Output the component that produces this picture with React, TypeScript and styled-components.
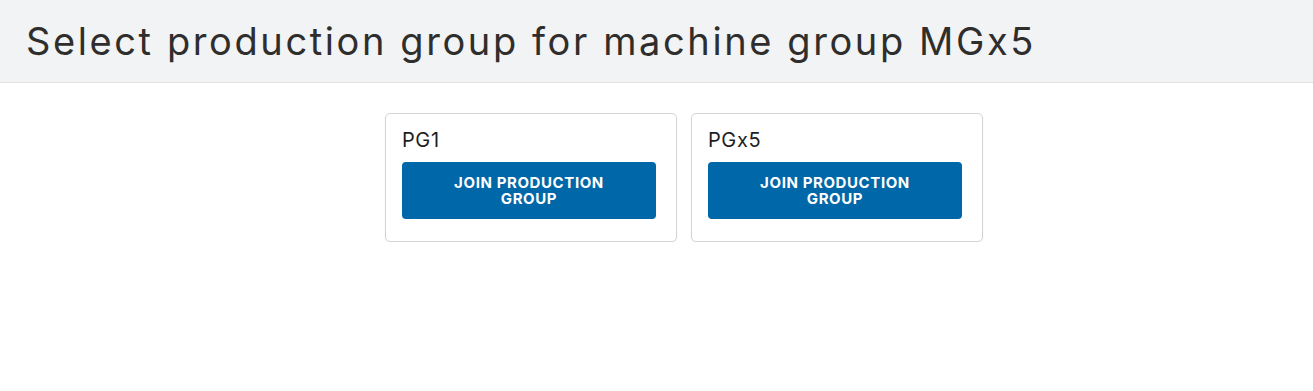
import React from "react";
import styled, { createGlobalStyle } from "styled-components";

const GlobalStyle = createGlobalStyle`
  html, body { margin: 0; padding: 0; background: #ffffff; }
  body { font-family: "Inter", "Liberation Sans", sans-serif; }
  * { box-sizing: border-box; }
`;

const Page = styled.div`
  display: flex;
  flex-direction: column;
  width: 100%;
`;

const Header = styled.header`
  height: 83px;
  background: #f2f3f5;
  border-bottom: 1px solid #e2e3e5;
  display: flex;
  align-items: center;
  padding: 0 26px;
`;

const Title = styled.h1`
  margin: 0;
  font-family: "Inter", "Liberation Sans", sans-serif;
  font-weight: 400;
  font-size: 38px;
  color: #2f2e2c;
  letter-spacing: 2.6px;
`;

const CardRow = styled.div`
  display: flex;
  justify-content: center;
  gap: 14px;
  padding: 30px 0 0 55px;
`;

const Card = styled.div`
  width: 292px;
  height: 129px;
  border: 1px solid #d4d4d4;
  border-radius: 5px;
  box-shadow: 0 1px 2px rgba(0, 0, 0, 0.06);
  padding: 14px 20px 22px 16px;
  display: flex;
  flex-direction: column;
  gap: 10px;
`;

const Name = styled.div`
  font-size: 20px;
  line-height: 24px;
  color: #1e1e1e;
  letter-spacing: 0.6px;
`;

const JoinButton = styled.button`
  height: 57px;
  width: 100%;
  border: none;
  border-radius: 4px;
  background: #0067a8;
  color: #ffffff;
  font-family: "Inter", "Liberation Sans", sans-serif;
  font-weight: 700;
  font-size: 15px;
  line-height: 16px;
  letter-spacing: 0.6px;
  text-transform: uppercase;
  padding: 0 40px;
  cursor: pointer;
`;

const groups = ["PG1", "PGx5"];

export default function App() {
  return (
    <Page>
      <GlobalStyle />
      <Header>
        <Title>Select production group for machine group MGx5</Title>
      </Header>
      <CardRow>
        {groups.map((g) => (
          <Card key={g}>
            <Name>{g}</Name>
            <JoinButton>Join production group</JoinButton>
          </Card>
        ))}
      </CardRow>
    </Page>
  );
}
